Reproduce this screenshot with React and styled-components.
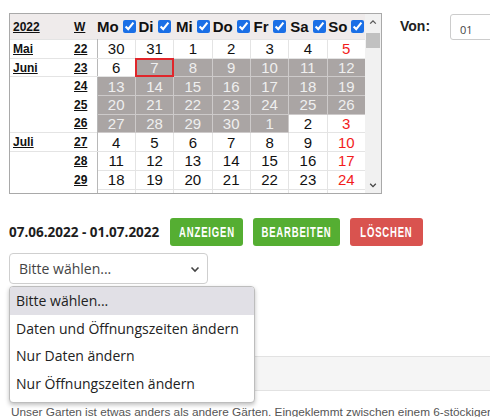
import styled, { createGlobalStyle } from "styled-components";

const GlobalStyle = createGlobalStyle`
  html, body {
    margin: 0;
    padding: 0;
    background: #fff;
    overflow: hidden;
  }
  body {
    font-family: "Liberation Sans", Arial, sans-serif;
  }
`;

const Page = styled.div`
  padding: 13px 0 0 9px;
  width: 481px;
`;

const TopRow = styled.div`
  display: flex;
  align-items: flex-start;
`;

const CalendarFrame = styled.div`
  display: flex;
  width: 373px;
  height: 181px;
  box-sizing: border-box;
  border: 1px solid #a9a9a9;
`;

const ScrollArea = styled.div`
  flex: 1;
  overflow: hidden;
`;

const Table = styled.table`
  width: 356px;
  table-layout: fixed;
  border-collapse: collapse;
`;

const HeadCell = styled.th`
  height: 25px;
  padding: 0;
  background: #efebeb;
  font-size: ${(p) => (p.$small ? "12px" : "15px")};
  font-weight: 700;
  color: #111;
  text-align: ${(p) => p.$align || "center"};
  padding-left: ${(p) => p.$pad || 0}px;
  white-space: nowrap;
  text-decoration: ${(p) => (p.$underline ? "underline" : "none")};
`;

const Check = styled.input`
  width: 13px;
  height: 13px;
  margin: 0 0 0 4px;
  vertical-align: -1px;
  accent-color: #1a6fe6;
`;

const SideCell = styled.td`
  height: 17.7px;
  padding: 0 0 0 ${(p) => p.$pad || 0}px;
  font-size: 12px;
  font-weight: 700;
  color: #111;
  text-decoration: underline;
  text-align: ${(p) => p.$align || "left"};
  border-top: ${(p) => (p.$line ? "1px solid #e4e4e4" : "none")};
  border-bottom: ${(p) => (p.$line ? "1px solid #e4e4e4" : "none")};
  border-right: ${(p) => (p.$divider ? "1px solid #b8b8b8" : "none")};
`;

const DayCell = styled.td`
  height: 17.7px;
  padding: 0;
  text-align: center;
  font-size: 15px;
  color: ${(p) => (p.$shade ? "#efefef" : p.$sun ? "#f21c1c" : "#111")};
  background: ${(p) => (p.$shade ? "#aaa5a4" : "#fff")};
  border: 1px solid ${(p) => (p.$shade ? "#cdcaca" : "#e4e4e4")};
  outline: ${(p) => (p.$selected ? "2px solid #e0262b" : "none")};
  outline-offset: -2px;
`;

const Scrollbar = styled.div`
  width: 16px;
  background: #f1f1f1;
  display: flex;
  flex-direction: column;
  align-items: center;
`;

const Arrow = styled.div`
  height: 16px;
  display: flex;
  align-items: center;
  justify-content: center;
`;

const Thumb = styled.div`
  width: 14px;
  height: 15px;
  margin-top: 3px;
  background: #c1c1c1;
`;

const Spacer = styled.div`
  flex: 1;
`;

const VonBox = styled.div`
  display: flex;
  align-items: center;
  margin: 1px 0 0 18px;
  gap: 10px;
`;

const VonLabel = styled.span`
  font-size: 14px;
  font-weight: 700;
  color: #222;
  width: 40px;
  margin-top: -3px;
`;

const VonInput = styled.div`
  width: 60px;
  height: 26px;
  box-sizing: border-box;
  border: 1px solid #ccc;
  border-radius: 3px;
  padding: 7px 0 0 9px;
  font-family: "Open Sans", sans-serif;
  font-size: 11px;
  color: #444;
`;

const ActionRow = styled.div`
  display: flex;
  align-items: center;
  margin-top: 24px;
`;

const Range = styled.span`
  font-family: "Open Sans", sans-serif;
  font-weight: 700;
  font-size: 13.5px;
  color: #1d1d1d;
  width: 161px;
`;

const Button = styled.button`
  height: 28px;
  width: ${(p) => p.$w}px;
  margin-right: 10px;
  padding: 0;
  border: none;
  border-radius: 3px;
  background: ${(p) => (p.$danger ? "#d9534f" : "#55ae32")};
  color: #fff;
  display: flex;
  align-items: center;
  justify-content: center;
  overflow: hidden;
`;

const ButtonLabel = styled.span`
  display: inline-block;
  font-family: "Liberation Sans", sans-serif;
  font-weight: 700;
  font-size: 14px;
  letter-spacing: 1.2px;
  transform: scaleX(0.68);
  white-space: nowrap;
`;

const SelectWrap = styled.div`
  position: relative;
  margin-top: 7px;
  width: 199px;
`;

const Select = styled.div`
  height: 31px;
  box-sizing: border-box;
  border: 1px solid #cfcfcf;
  border-radius: 4px;
  display: flex;
  align-items: center;
  justify-content: space-between;
  padding: 0 7px 0 9px;
  font-family: "Open Sans", sans-serif;
  font-size: 14px;
  color: #444;
`;

const Dropdown = styled.ul`
  position: absolute;
  top: 33px;
  left: 0;
  width: 246px;
  margin: 0;
  padding: 0 0 4px;
  list-style: none;
  box-sizing: border-box;
  background: #fff;
  border: 1px solid #bdbdbd;
  border-radius: 4px;
  box-shadow: 0 2px 4px rgba(0, 0, 0, 0.25);
  overflow: hidden;
  z-index: 2;
`;

const Option = styled.li`
  height: 27.7px;
  line-height: 28px;
  padding-left: 6px;
  font-family: "Open Sans", sans-serif;
  font-size: 14px;
  color: #222;
  background: ${(p) => (p.$active ? "#e1e0e6" : "#fff")};
`;

const Bar = styled.div`
  margin-top: 72px;
  height: 35px;
  box-sizing: border-box;
  background: #f5f5f5;
  border-top: 1px solid #e2e2e2;
  border-bottom: 1px solid #e2e2e2;
`;

const Intro = styled.p`
  margin: 14px 0 0 2px;
  font-size: 11.8px;
  color: #555;
  white-space: nowrap;
`;

const days = ["Mo", "Di", "Mi", "Do", "Fr", "Sa", "So"];

const weeks = [
  { month: "Mai", week: 22, days: [30, 31, 1, 2, 3, 4, 5], shade: [] },
  { month: "Juni", week: 23, days: [6, 7, 8, 9, 10, 11, 12], shade: [1, 2, 3, 4, 5, 6] },
  { week: 24, days: [13, 14, 15, 16, 17, 18, 19], shade: [0, 1, 2, 3, 4, 5, 6] },
  { week: 25, days: [20, 21, 22, 23, 24, 25, 26], shade: [0, 1, 2, 3, 4, 5, 6] },
  { week: 26, days: [27, 28, 29, 30, 1, 2, 3], shade: [0, 1, 2, 3, 4] },
  { month: "Juli", week: 27, days: [4, 5, 6, 7, 8, 9, 10], shade: [] },
  { week: 28, days: [11, 12, 13, 14, 15, 16, 17], shade: [] },
  { week: 29, days: [18, 19, 20, 21, 22, 23, 24], shade: [] },
  { week: 30, days: [25, 26, 27, 28, 29, 30, 31], shade: [] },
];

const options = [
  "Bitte wählen...",
  "Daten und Öffnungszeiten ändern",
  "Nur Daten ändern",
  "Nur Öffnungszeiten ändern",
];

const Chevron = ({ up, size = 8 }) => (
  <svg width={size} height={size} viewBox="0 0 10 10">
    <path
      d={up ? "M1.5 7 L5 3.5 L8.5 7" : "M1.5 3.5 L5 7 L8.5 3.5"}
      fill="none"
      stroke={up ? "#555" : "#444"}
      strokeWidth="1.6"
    />
  </svg>
);

export default function App() {
  return (
    <Page>
      <GlobalStyle />
      <TopRow>
        <CalendarFrame>
          <ScrollArea>
            <Table>
              <colgroup>
                <col style={{ width: 57 }} />
                <col style={{ width: 30 }} />
                {days.map((d) => (
                  <col key={d} />
                ))}
              </colgroup>
              <thead>
                <tr>
                  <HeadCell $small $underline $align="left" $pad={3}>
                    2022
                  </HeadCell>
                  <HeadCell $small $underline $align="left" $pad={7}>
                    W
                  </HeadCell>
                  {days.map((d) => (
                    <HeadCell key={d}>
                      {d}
                      <Check type="checkbox" checked readOnly />
                    </HeadCell>
                  ))}
                </tr>
              </thead>
              <tbody>
                {weeks.map((w) => (
                  <tr key={w.week}>
                    <SideCell $pad={3} $line={!!w.month}>
                      {w.month}
                    </SideCell>
                    <SideCell $pad={7} $line={!!w.month} $divider>
                      {w.week}
                    </SideCell>
                    {w.days.map((d, i) => (
                      <DayCell
                        key={i}
                        $shade={w.shade.includes(i)}
                        $sun={i === 6}
                        $selected={w.week === 23 && i === 1}
                      >
                        {d}
                      </DayCell>
                    ))}
                  </tr>
                ))}
              </tbody>
            </Table>
          </ScrollArea>
          <Scrollbar>
            <Arrow>
              <Chevron up />
            </Arrow>
            <Thumb />
            <Spacer />
            <Arrow>
              <Chevron />
            </Arrow>
          </Scrollbar>
        </CalendarFrame>
        <VonBox>
          <VonLabel>Von:</VonLabel>
          <VonInput>01</VonInput>
        </VonBox>
      </TopRow>

      <ActionRow>
        <Range>07.06.2022 - 01.07.2022</Range>
        <Button $w={73}>
          <ButtonLabel>ANZEIGEN</ButtonLabel>
        </Button>
        <Button $w={87}>
          <ButtonLabel>BEARBEITEN</ButtonLabel>
        </Button>
        <Button $w={73} $danger>
          <ButtonLabel>LÖSCHEN</ButtonLabel>
        </Button>
      </ActionRow>

      <SelectWrap>
        <Select>
          Bitte wählen...
          <Chevron size={10} />
        </Select>
        <Dropdown>
          {options.map((o, i) => (
            <Option key={o} $active={i === 0}>
              {o}
            </Option>
          ))}
        </Dropdown>
      </SelectWrap>

      <Bar />
      <Intro>
        Unser Garten ist etwas anders als andere Gärten. Eingeklemmt zwischen einem 6-stöckigen
        Wohnhaus und einem Hinterhof
      </Intro>
    </Page>
  );
}
